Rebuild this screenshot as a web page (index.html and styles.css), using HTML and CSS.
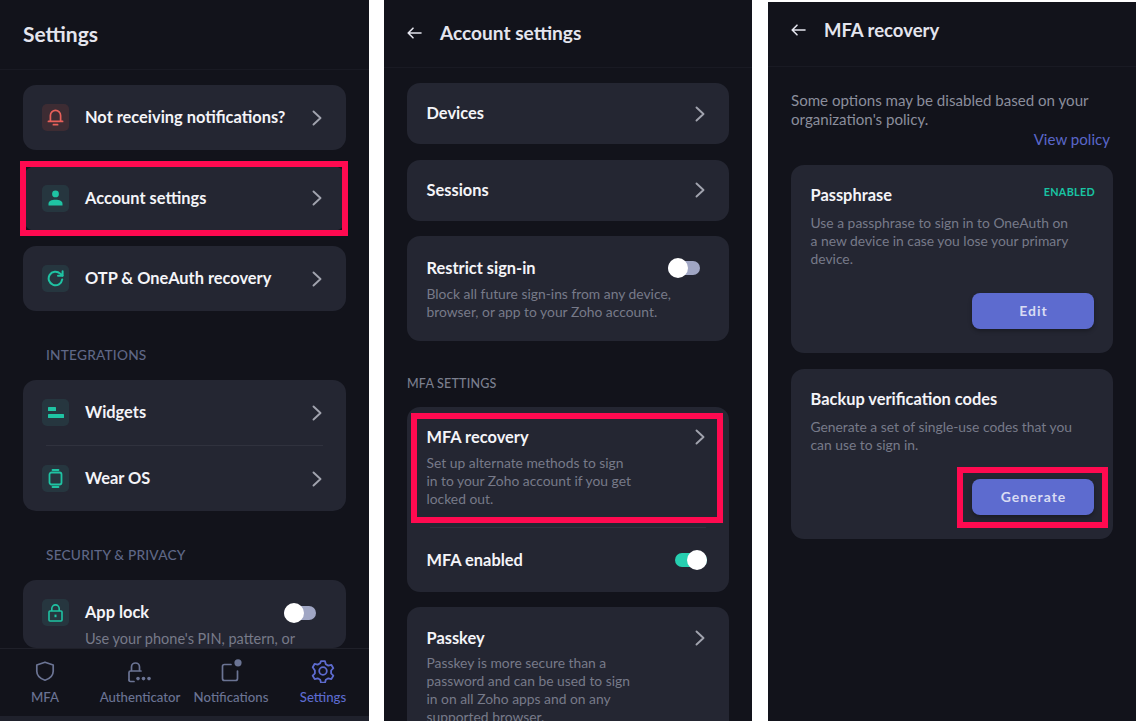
FILE: index.html
```html
<!DOCTYPE html>
<html>
<head>
  <title>OneAuth settings</title>
  <link rel="stylesheet" href="styles.css">
</head>
<body>
<div class="screens">

  <!-- Settings -->
  <div class="phone phone-one">
    <div class="top-bar"><h1>Settings</h1></div>
    <div class="content">
      <div class="card single">
        <div class="row">
          <span class="tile tile-red">
            <svg width="17" height="19" viewBox="0 0 17 19" fill="none" stroke="#e8605a" stroke-width="1.7" stroke-linecap="round" stroke-linejoin="round"><path d="M3.4 13.2V7.4a5.1 5.1 0 0 1 10.2 0v5.8"/><path d="M1.4 13.4h14.2"/><path d="M6.4 16.7h4.2"/></svg>
          </span>
          <span class="row-title">Not receiving notifications?</span>
          <svg class="chevron" width="10" height="16" viewBox="0 0 10 16"><path d="M1.5 1.5 8.5 8l-7 6.5"/></svg>
        </div>
      </div>
      <div class="card single">
        <div class="row">
          <span class="tile">
            <svg width="17" height="16" viewBox="0 0 17 16" fill="#1fc3a3"><circle cx="8.5" cy="3.9" r="3.4"/><path d="M1.5 15.5v-1.7c0-2.6 3-4 7-4s7 1.4 7 4v1.7z"/></svg>
          </span>
          <span class="row-title">Account settings</span>
          <svg class="chevron" width="10" height="16" viewBox="0 0 10 16"><path d="M1.5 1.5 8.5 8l-7 6.5"/></svg>
        </div>
        <div class="mark mark-account"></div>
      </div>
      <div class="card single">
        <div class="row">
          <span class="tile">
            <svg width="17" height="17" viewBox="0 0 17 17" fill="none" stroke="#1fc3a3" stroke-width="2" stroke-linecap="round" stroke-linejoin="round"><path d="M15.2 9.4a6.8 6.8 0 1 1-2-5.8l2.2 2"/><path d="M15.6 1.2v4.6H11"/></svg>
          </span>
          <span class="row-title">OTP &amp; OneAuth recovery</span>
          <svg class="chevron" width="10" height="16" viewBox="0 0 10 16"><path d="M1.5 1.5 8.5 8l-7 6.5"/></svg>
        </div>
      </div>

      <div class="section-label">INTEGRATIONS</div>
      <div class="card">
        <div class="row">
          <span class="tile">
            <svg width="16" height="11" viewBox="0 0 16 11" fill="#1fc3a3"><rect x="0" y="0" width="8" height="4" rx="0.5"/><rect x="0" y="7" width="16" height="4" rx="0.5"/></svg>
          </span>
          <span class="row-title">Widgets</span>
          <svg class="chevron" width="10" height="16" viewBox="0 0 10 16"><path d="M1.5 1.5 8.5 8l-7 6.5"/></svg>
        </div>
        <div class="divider"></div>
        <div class="row">
          <span class="tile">
            <svg width="15" height="19" viewBox="0 0 15 19" fill="none" stroke="#1fc3a3" stroke-width="1.8" stroke-linecap="round"><rect x="1.5" y="3.5" width="12" height="12" rx="2"/><path d="M4.5 1h6M4.5 18h6"/></svg>
          </span>
          <span class="row-title">Wear OS</span>
          <svg class="chevron" width="10" height="16" viewBox="0 0 10 16"><path d="M1.5 1.5 8.5 8l-7 6.5"/></svg>
        </div>
      </div>

      <div class="section-label">SECURITY &amp; PRIVACY</div>
      <div class="card">
        <div class="row row-applock">
          <span class="tile">
            <svg width="15" height="18" viewBox="0 0 15 18" fill="none" stroke="#1fc3a3" stroke-width="1.6"><rect x="1" y="7" width="13" height="10" rx="1"/><path d="M3.8 7V4.6a3.7 3.7 0 0 1 7.4 0V7"/><path d="M7.5 10.6v2.6" stroke-width="2"/></svg>
          </span>
          <span class="row-title">App lock</span>
          <span class="toggle"><span class="knob"></span></span>
        </div>
        <p class="row-note">Use your phone's PIN, pattern, or</p>
      </div>
    </div>
    <div class="tabs">
      <div class="tab">
        <svg width="24" height="24" viewBox="0 0 24 24" fill="none" stroke="#6b7494" stroke-width="1.7" stroke-linejoin="round"><path d="M12 3.2 20.2 6v6.2c0 4.3-3.3 7.300-8.200 9-4.900-1.700-8.200-4.700-8.200-9V6z"/></svg>
        <span>MFA</span>
      </div>
      <div class="tab">
        <svg width="26" height="24" viewBox="0 0 26 24" fill="none" stroke="#6b7494" stroke-width="1.7" stroke-linecap="round"><path d="M2 21v-7.500A1.500 1.500 0 0 1 3.500 12H14"/><path d="M2 21a1.500 1.500 0 0 0 1.500 1.500H7"/><path d="M4.500 11.500V8a4 4 0 0 1 8 0v3.500"/><g fill="#6b7494" stroke="none"><circle cx="11" cy="19.6" r="1.8"/><circle cx="16.5" cy="19.6" r="1.8"/><circle cx="22" cy="19.6" r="1.8"/></g></svg>
        <span>Authenticator</span>
      </div>
      <div class="tab">
        <svg width="24" height="24" viewBox="0 0 24 24" fill="none" stroke="#6b7494" stroke-width="1.7" stroke-linecap="round"><path d="M12 5.500H5.500a2 2 0 0 0-2 2v12a2 2 0 0 0 2 2h11a2 2 0 0 0 2-2V12"/><circle cx="19" cy="3.8" r="3.6" fill="#6b7494" stroke="none"/></svg>
        <span>Notifications</span>
      </div>
      <div class="tab tab-on">
        <svg width="24" height="24" viewBox="0 0 24 24" fill="none" stroke="#5d6bcf" stroke-width="1.8" stroke-linejoin="round"><path d="M10 2.200h4l.8 3 2.500 1.400 3-.8 2 3.400-2.200 2.300v2.900l2.200 2.300-2 3.400-3-.8-2.500 1.400-.8 3h-4l-.8-3-2.500-1.400-3 .8-2-3.400 2.200-2.300v-2.900L1.700 8.200l2-3.400 3 .8 2.500-1.400z"/><circle cx="12" cy="12" r="3.8"/></svg>
        <span>Settings</span>
      </div>
    </div>
    <div class="bottom-strip"></div>
  </div>

  <!-- Account settings -->
  <div class="phone phone-two">
    <div class="top-bar">
      <svg class="back" width="15" height="12" viewBox="0 0 15 12" fill="none" stroke="#e4e5ee" stroke-width="1.6" stroke-linecap="round" stroke-linejoin="round"><path d="M14 6H1.5M6 1.2 1.2 6 6 10.8"/></svg>
      <h1>Account settings</h1>
    </div>
    <div class="content">
      <div class="card single">
        <div class="row row-plain">
          <span class="row-title">Devices</span>
          <svg class="chevron" width="10" height="16" viewBox="0 0 10 16"><path d="M1.5 1.5 8.5 8l-7 6.5"/></svg>
        </div>
      </div>
      <div class="card single">
        <div class="row row-plain">
          <span class="row-title">Sessions</span>
          <svg class="chevron" width="10" height="16" viewBox="0 0 10 16"><path d="M1.5 1.5 8.5 8l-7 6.5"/></svg>
        </div>
      </div>
      <div class="card single">
        <div class="block block-restrict">
          <div class="block-head">
            <span class="row-title">Restrict sign-in</span>
            <span class="toggle"><span class="knob"></span></span>
          </div>
          <p class="note">Block all future sign-ins from any device,<br>browser, or app to your Zoho account.</p>
        </div>
      </div>

      <div class="section-label label-small">MFA SETTINGS</div>
      <div class="card single">
        <div class="block">
          <div class="block-head">
            <span class="row-title">MFA recovery</span>
            <svg class="chevron" width="10" height="16" viewBox="0 0 10 16"><path d="M1.5 1.5 8.5 8l-7 6.5"/></svg>
          </div>
          <p class="note">Set up alternate methods to sign<br>in to your Zoho account if you get<br>locked out.</p>
          <div class="mark mark-recovery"></div>
        </div>
        <div class="divider"></div>
        <div class="row row-plain row-enabled">
          <span class="row-title">MFA enabled</span>
          <span class="toggle toggle-on"><span class="knob"></span></span>
        </div>
      </div>
      <div class="card single">
        <div class="block block-passkey">
          <div class="block-head">
            <span class="row-title">Passkey</span>
            <svg class="chevron" width="10" height="16" viewBox="0 0 10 16"><path d="M1.5 1.5 8.5 8l-7 6.5"/></svg>
          </div>
          <p class="note">Passkey is more secure than a<br>password and can be used to sign<br>in on all Zoho apps and on any<br>supported browser.</p>
        </div>
      </div>
    </div>
  </div>

  <!-- MFA recovery -->
  <div class="phone phone-three">
    <div class="top-bar">
      <svg class="back" width="15" height="12" viewBox="0 0 15 12" fill="none" stroke="#e4e5ee" stroke-width="1.6" stroke-linecap="round" stroke-linejoin="round"><path d="M14 6H1.5M6 1.2 1.2 6 6 10.8"/></svg>
      <h1>MFA recovery</h1>
    </div>
    <div class="content">
      <p class="intro">Some options may be disabled based on your<br>organization's policy.</p>
      <div class="policy">View policy</div>
      <div class="card single">
        <div class="block block-option">
          <div class="option-head">
            <span class="row-title">Passphrase</span>
            <span class="status">ENABLED</span>
          </div>
          <p class="note">Use a passphrase to sign in to OneAuth on<br>a new device in case you lose your primary<br>device.</p>
          <div class="actions"><button class="action">Edit</button></div>
        </div>
      </div>
      <div class="card single">
        <div class="block block-option">
          <div class="option-head">
            <span class="row-title">Backup verification codes</span>
          </div>
          <p class="note">Generate a set of single-use codes that you<br>can use to sign in.</p>
          <div class="actions">
            <button class="action">Generate<span class="mark mark-generate"></span></button>
          </div>
        </div>
      </div>
    </div>
  </div>

</div>
</body>
</html>
```

FILE: styles.css
```css
body {
  margin: 0;
  background-color: #ffffff;
  font-family: Lato, "Noto Sans", sans-serif;
}
.screens {
  display: flex;
  align-items: flex-start;
  height: 721px;
  overflow: hidden;
}
.phone {
  display: flex;
  flex-direction: column;
  flex: none;
  width: 368px;
  height: 721px;
  background-color: #12131b;
  overflow: hidden;
}
.phone-one {
  width: 369px;
}
.phone-two {
  margin-left: 15px;
}
.phone-three {
  margin-left: 16px;
  margin-top: 2px;
  height: 719px;
}
.top-bar {
  display: flex;
  align-items: center;
  flex: none;
  box-sizing: border-box;
  height: 70px;
  padding-left: 23px;
  padding-bottom: 2px;
  border-bottom: 1px solid #191a23;
}
.phone-two .top-bar {
  height: 68px;
}
.phone-three .top-bar {
  height: 65px;
  padding-bottom: 8px;
}
.top-bar h1 {
  margin: 0;
  font-size: 21px;
  font-weight: 700;
  color: #e4e5ee;
}
.phone-two .top-bar h1 {
  font-size: 19.1px;
}
.phone-three .top-bar h1 {
  font-size: 18.5px;
}
.back {
  margin-right: 18px;
}
.content {
  flex: 1;
  min-height: 0;
  padding: 15px 23px 0;
  overflow: hidden;
}
.card {
  position: relative;
  background-color: #242632;
  border-radius: 13px;
  width: 323px;
}
.phone-two .card,
.phone-three .card {
  width: 322px;
}
.card.single {
  margin-bottom: 15.5px;
}
.row {
  position: relative;
  display: flex;
  align-items: center;
  box-sizing: border-box;
  height: 65px;
  padding: 0 24px 0 19px;
}
.row-plain {
  height: 61px;
  padding-left: 19.5px;
  justify-content: space-between;
}
.row-enabled {
  height: 63.5px;
  padding-right: 22px;
}
.row-enabled .row-title {
  padding-bottom: 0;
}
.row-applock {
  padding-right: 30px;
}
.tile {
  display: flex;
  align-items: center;
  justify-content: center;
  flex: none;
  width: 27px;
  height: 27px;
  margin-right: 16px;
  border-radius: 5px;
  background-color: #26363f;
}
.tile-red {
  background-color: #3d2c33;
}
.row-title {
  flex: 1;
  padding-bottom: 2px;
  font-size: 16.4px;
  font-weight: 700;
  color: #f4f4f8;
}
.row-plain .row-title {
  flex: none;
}
.chevron {
  flex: none;
  fill: none;
  stroke: #a1a3ae;
  stroke-width: 1.9;
  stroke-linecap: round;
  stroke-linejoin: round;
}
.divider {
  height: 1px;
  margin: 0 23px;
  background-color: #30323e;
}
.section-label {
  margin: 34px 0 15px;
  padding-left: 23px;
  font-size: 13.7px;
  line-height: 20px;
  font-weight: 500;
  letter-spacing: 0.2px;
  color: #5f6786;
}
.label-small {
  margin: 33px 0 13px;
  padding-left: 0;
  font-size: 12.5px;
  color: #7b7f8e;
}
.row-note {
  margin: -15px 0 0;
  padding-left: 62px;
  font-size: 14.5px;
  line-height: 18px;
  color: #777a89;
}
.toggle {
  display: flex;
  align-items: center;
  flex: none;
  width: 32px;
  height: 14px;
  border-radius: 7px;
  background-color: #a0a6c4;
}
.toggle-on {
  justify-content: flex-end;
  background-color: #26cfb0;
}
.knob {
  flex: none;
  width: 20px;
  height: 20px;
  border-radius: 50%;
  background-color: #ffffff;
}
.block {
  position: relative;
  box-sizing: border-box;
  padding: 20px 24px 19px 19.5px;
}
.block-restrict {
  padding-top: 22px;
  padding-right: 29.5px;
  padding-bottom: 20px;
}
.block-passkey {
  padding-top: 21px;
}
.block-passkey .note {
  margin-top: 6px;
}
.block-head {
  display: flex;
  align-items: center;
  justify-content: space-between;
  height: 20px;
}
.block-head .row-title {
  flex: none;
}
.note {
  margin: 7px 0 0;
  font-size: 13.85px;
  line-height: 18px;
  color: #777a89;
}
.phone-three .content {
  padding-top: 23.5px;
}
.intro {
  margin: 0;
  font-size: 15.1px;
  line-height: 19px;
  color: #8b8e9c;
}
.policy {
  padding: 0.5px 3px 0 0;
  text-align: right;
  font-size: 15.1px;
  line-height: 20px;
  color: #5a67c9;
}
.phone-three .card {
  margin-top: 16px;
  margin-bottom: 0;
}
.block-option {
  padding: 20px 19px 24px 19.5px;
}
.option-head {
  display: flex;
  justify-content: space-between;
  align-items: flex-start;
  height: 22px;
}
.option-head .row-title {
  flex: none;
}
.status {
  margin-right: -1px;
  font-size: 10.8px;
  line-height: 14px;
  font-weight: 700;
  letter-spacing: 0.3px;
  color: #19c4a3;
}
.actions {
  display: flex;
  justify-content: flex-end;
  margin-top: 25px;
}
.action {
  position: relative;
  width: 122px;
  height: 36px;
  padding: 0 0 2px 1px;
  border: none;
  border-radius: 8px;
  background-color: #5d6bcf;
  box-shadow: 0 2px 4px rgba(0, 0, 0, 0.3);
  font-family: inherit;
  font-size: 14px;
  font-weight: 700;
  letter-spacing: 1px;
  color: #d9dcf3;
}
.tabs {
  display: grid;
  grid-template-columns: 90px 100px 82px 97px;
  flex: none;
  box-sizing: border-box;
  height: 68px;
  padding-top: 10px;
  border-top: 1px solid #1f2029;
  background-color: #12131b;
}
.tab {
  display: flex;
  flex-direction: column;
  align-items: center;
  font-size: 13.2px;
  font-weight: 500;
  color: #6b7494;
}
.tab span {
  margin-top: 6px;
  white-space: nowrap;
}
.tab-on {
  padding-left: 5px;
  color: #5d6bcf;
}
.bottom-strip {
  flex: none;
  height: 5px;
  background-color: #1f212c;
}
/* red annotation boxes drawn over the shot */
.mark {
  position: absolute;
  box-sizing: border-box;
  border: 6px solid #ff0a50;
  pointer-events: none;
}
.mark-account {
  top: -5px;
  left: -3px;
  right: -2px;
  bottom: -5px;
}
.mark-recovery {
  top: 6px;
  left: 4px;
  right: 6px;
  bottom: 4px;
}
.mark-generate {
  top: -12px;
  left: -15px;
  right: -14px;
  bottom: -13px;
}
```
